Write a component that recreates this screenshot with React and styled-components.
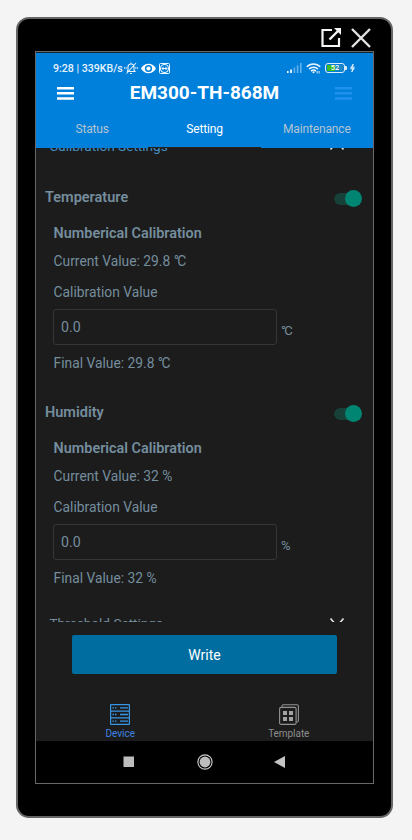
import React from "react";
import styled, { createGlobalStyle } from "styled-components";

const GlobalStyle = createGlobalStyle`
  * { box-sizing: border-box; }
  html, body { margin: 0; background: #f4f4f4; }
  body { font-family: Roboto, "Noto Sans", sans-serif; overflow: hidden; }
  svg { display: block; flex: none; }
`;

const Page = styled.div`
  height: 840px;
  padding: 17px 19px 0 16px;
`;
const Device = styled.div`
  width: 377px;
  height: 801px;
  border: 2px solid #656567;
  border-radius: 13px;
  background: #000;
`;
const WindowBar = styled.div`
  height: 32px;
  display: flex;
  justify-content: flex-end;
  gap: 10px;
  padding: 9px 20px 0 0;
`;
const Screen = styled.div`
  width: 339px;
  height: 733px;
  margin-left: 17px;
  border: 1px solid #686868;
  background: #1c1c1c;
  display: flex;
  flex-direction: column;
  overflow: hidden;
`;
const Header = styled.header`
  flex: none;
  height: 96px;
  background: #007fdb;
  border-top: 1px solid #10242f;
  color: #fff;
`;
const StatusBar = styled.div`
  height: 30px;
  display: flex;
  align-items: center;
  padding: 0 18px 0 17px;
`;
const StatusText = styled.span`
  width: 71px;
  font-size: 10.6px;
  font-weight: 500;
  white-space: nowrap;
  color: #e8f3fb;
`;
const StatusIcons = styled.div`
  display: flex;
  align-items: center;
  gap: ${(p) => p.$gap}px;
  margin-left: ${(p) => (p.$end ? "auto" : "0")};
`;
const TitleRow = styled.div`
  height: 20px;
  display: flex;
  align-items: center;
  justify-content: space-between;
  padding: 0 21px;
`;
const Title = styled.h1`
  margin: 0;
  font-size: 19px;
  line-height: 20px;
  font-weight: 700;
`;
const Tabs = styled.nav`
  height: 45px;
  display: grid;
  grid-template-columns: repeat(3, 1fr);
`;
const Tab = styled.a`
  padding-top: 18px;
  text-align: center;
  font-size: 12px;
  letter-spacing: -0.15px;
  line-height: 16px;
  color: ${(p) => (p.$active ? "#fff" : "#b4c4d0")};
  border-bottom: 1px solid ${(p) => (p.$active ? "#25221c" : "#007fdb")};
`;
const Content = styled.main`
  flex: none;
  height: 474px;
  overflow: hidden;
  color: #758e9e;
  font-size: 13.8px;
  line-height: 20px;
`;
const Collapse = styled.div`
  height: 20px;
  margin-top: ${(p) => p.$top}px;
  padding: 0 28px 0 13.5px;
  display: flex;
  align-items: center;
  justify-content: space-between;
  font-size: 13.6px;
  color: ${(p) => (p.$open ? "#448fc3" : "#758e9e")};
`;
const Sensor = styled.section`
  margin-top: ${(p) => p.$top}px;
  padding: 0 11px 0 9px;
`;
const SensorHead = styled.div`
  height: 20px;
  display: flex;
  align-items: center;
  justify-content: space-between;
  font-size: 14.5px;
  font-weight: 600;
`;
const Track = styled.span`
  width: 28px;
  height: 18px;
  margin-top: 1px;
  display: flex;
  align-items: center;
  justify-content: flex-end;
  background: linear-gradient(#174039, #174039) 100% 50% / 20px 12px no-repeat,
    radial-gradient(circle, #174039 5.5px, transparent 6px) 0 50% / 12px 12px no-repeat;
  background-position: 6px 50%, 0 50%;
`;
const Knob = styled.span`
  width: 17px;
  height: 17px;
  border-radius: 50%;
  background: #008573;
  box-shadow: 3px 0 0 -3px #1c1c1c;
`;
const Calibration = styled.div`
  padding-left: 8.6px;
  display: flex;
  flex-direction: column;
`;
const Line = styled.div`
  height: 20px;
  margin-top: ${(p) => p.$gap}px;
  font-weight: ${(p) => (p.$bold ? 600 : 400)};
  font-size: ${(p) => (p.$bold ? 14.4 : 13.8)}px;
  white-space: nowrap;
`;
const Field = styled.div`
  margin: 7px 0 0 -0.6px;
  display: flex;
  align-items: center;
  gap: 4px;
`;
const Input = styled.input`
  width: 224px;
  height: 36px;
  padding: 0 7px;
  border: 1px solid #363636;
  border-radius: 3px;
  background: transparent;
  color: #758e9e;
  font: 14.2px Roboto, sans-serif;
  outline: none;
`;
const Unit = styled.span`
  padding-top: 8px;
  font-size: 13px;
`;
const Degree = styled.span`
  letter-spacing: -1.5px;
`;
const Footer = styled.footer`
  flex: 1;
  display: flex;
  flex-direction: column;
`;
const WriteButton = styled.button`
  width: 265px;
  height: 39px;
  margin: 13px 0 0 36px;
  border: 0;
  border-radius: 2px;
  background: #006da1;
  color: #fff;
  font: 400 14px Roboto, sans-serif;
`;
const BottomTabs = styled.nav`
  margin-top: 30px;
  display: grid;
  grid-template-columns: repeat(2, 1fr);
`;
const BottomTab = styled.a`
  display: flex;
  flex-direction: column;
  align-items: center;
  gap: 3px;
  font-size: 10px;
  letter-spacing: -0.05px;
  line-height: 12px;
  color: ${(p) => (p.$active ? "#3d83e2" : "#8e8e8e")};
`;
const SystemNav = styled.div`
  flex: none;
  height: 42px;
  background: #000;
  display: grid;
  grid-template-columns: repeat(3, 75.5px);
  justify-content: center;
  align-items: center;
  justify-items: center;
`;

const OpenIcon = () => (
  <svg width="20" height="20" viewBox="0 0 20 20" fill="none" stroke="#f5f5f5">
    <path d="M11 2H1.5V18H18V10" strokeWidth="2.2" />
    <path d="M8.5 11.5L17 3" strokeWidth="2.4" />
    <path d="M13 0H20V7Z" fill="#f5f5f5" stroke="none" />
  </svg>
);
const CloseIcon = () => (
  <svg width="20" height="20" viewBox="0 0 20 20" fill="none" stroke="#e4e4e4" strokeWidth="2.4">
    <path d="M1 1L19 19M19 1L1 19" />
  </svg>
);
const MuteIcon = () => (
  <svg width="14" height="13" viewBox="0 0 14 13" fill="none" stroke="#e8f3fb" strokeWidth="1.1">
    <path d="M3 9.5H11L10 8V5C10 3 9 2 7 2S4 3 4 5V8L3 9.5M6 11.5H8M7 .5V2M2.5 11.5L12 1" />
    <path d="M.6 5V7M13.4 5V7M2.2 4.8V7M11.8 4.8V7" strokeWidth=".8" />
  </svg>
);
const EyeIcon = () => (
  <svg width="15" height="11" viewBox="0 0 15 11">
    <path d="M0 5.5C3-.8 12-.8 15 5.5C12 11.8 3 11.8 0 5.5Z" fill="#fff" />
    <circle cx="7.5" cy="5.5" r="3.6" fill="#007fdb" />
    <circle cx="7.5" cy="5.5" r="2.1" fill="#fff" />
  </svg>
);
const RemoteIcon = () => (
  <svg width="11" height="11" viewBox="0 0 11 11">
    <rect x=".5" y=".5" width="10" height="10" rx="1" fill="#007fdb" stroke="#eaf5fc" />
    <circle cx="5.5" cy="5.5" r="4" fill="none" stroke="#eaf5fc" strokeWidth="1.1" />
    <path d="M2.3 5.5L4.5 3.8V5H6.5V3.8L8.7 5.5L6.5 7.2V6H4.5V7.2Z" fill="#fff" />
  </svg>
);
const SignalIcon = () => (
  <svg width="15" height="10" viewBox="0 0 15 10">
    <path d="M0 8H1.6V10H0ZM3.2 6.5H4.9V10H3.2Z" fill="#fff" />
    <path d="M6.6 4.5H8.2V10H6.6ZM9.8 2.3H11.4V10H9.8ZM13 0H14.6V10H13Z" fill="#63b1ea" />
  </svg>
);
const WifiIcon = () => (
  <svg width="15" height="11" viewBox="0 0 15 11" fill="none" stroke="#edf6fc" strokeWidth="1.5">
    <path d="M.8 3.8C4.4 0 10.6 0 14.2 3.8M3 6.1C5.5 3.5 9.5 3.5 12 6.1M5 8.1C6.5 6.8 8.5 6.8 10 8.1" />
    <circle cx="7.5" cy="9.3" r="1" fill="#fff" stroke="none" />
    <path d="M11.2 8V10.5M13.1 8V10.5" strokeWidth=".9" />
  </svg>
);
const Battery = styled.span`
  width: 20px;
  height: 10px;
  border: 1px solid #dcecf5;
  border-radius: 3px;
  display: flex;
  align-items: center;
  justify-content: center;
  font-size: 7.5px;
  line-height: 8px;
  font-weight: 500;
  background: linear-gradient(90deg, #3cba22 8px, #1d85c0 8px) 50% / 16px 6px no-repeat;
`;
const BatteryTip = styled.span`
  width: 2px;
  height: 4px;
  margin: 0 3px 0 0;
  background: #dcecf5;
  border-radius: 0 1px 1px 0;
`;
const PowerCell = styled.span`
  display: flex;
  align-items: center;
`;
const BoltIcon = () => (
  <svg width="5" height="10" viewBox="0 0 6 10">
    <path d="M4 .3L2 4M4 5.8L2 9.7" fill="none" stroke="#fff" strokeWidth="1.4" />
    <path d="M.6 4H5.6M.4 5.9H5.4" stroke="#fff" strokeWidth="1.2" />
  </svg>
);
const MenuIcon = ({ color }) => (
  <svg width="17" height="13" viewBox="0 0 17 13" fill={color}>
    <path d="M0 0H17V2.5H0ZM0 5.1H17V7.6H0ZM0 10.2H17V12.7H0Z" />
  </svg>
);
const Chevron = ({ up }) => (
  <svg width="16" height="10" viewBox="0 0 16 10" fill="none" stroke="#e3e3e3" strokeWidth="1.6">
    <path d={up ? "M1.5 8.5L8 1L14.5 8.5" : "M1.5 .5L8 8L14.5 .5"} />
  </svg>
);
const DeviceIcon = () => (
  <svg width="20" height="21" viewBox="0 0 20 21" fill="none" stroke="#3795e6" strokeWidth="1.2">
    <rect x=".6" y=".6" width="18.8" height="19.8" rx=".5" />
    <path d="M.6 7.2H19.4M.6 13.8H19.4" />
    <path d="M10 3.9H18M10 10.5H18M10 17.1H18" strokeWidth="1.4" />
    <path d="M2.5 3.9H4M5 3.9H6.5M2.5 10.5H4M5 10.5H6.5M2.5 17.1H4M5 17.1H6.5" strokeWidth="1.3" />
  </svg>
);
const TemplateIcon = () => (
  <svg width="20" height="21" viewBox="0 0 20 21" fill="none" stroke="#929292" strokeWidth="1.1">
    <rect x=".6" y="3.4" width="16.5" height="17" rx="1.5" />
    <path d="M3 3V2.2Q3 .8 4.4 .8H18Q19.4 .8 19.4 2.2V16.5Q19.4 18 18 18H17.4" />
    <path d="M4 7H8V11H4ZM10 7H14V11H10ZM4 13H8V17H4ZM10 13H14V17H10Z" fill="#a2a2a2" stroke="none" />
  </svg>
);
const StopIcon = () => (
  <svg width="12" height="12" viewBox="0 0 12 12">
    <rect x=".5" y=".5" width="10.5" height="10.5" fill="#bdbdbd" />
  </svg>
);
const HomeIcon = () => (
  <svg width="16" height="16" viewBox="0 0 16 16">
    <circle cx="8" cy="8" r="7.1" fill="none" stroke="#d0d0d0" strokeWidth="1.1" />
    <circle cx="8" cy="8" r="5.4" fill="#bdbdbd" />
  </svg>
);
const BackIcon = () => (
  <svg width="12" height="12" viewBox="0 0 12 12">
    <path d="M0 6L11 0V12Z" fill="#c4c4c4" />
  </svg>
);

const sensors = [
  { name: "Temperature", value: "29.8", unit: "°C", top: 32 },
  { name: "Humidity", value: "32", unit: "%", top: 30 },
];

function SensorBlock({ name, value, unit, top }) {
  const mark = unit === "%" ? unit : <Degree>{unit}</Degree>;
  return (
    <Sensor $top={top}>
      <SensorHead>
        {name}
        <Track><Knob /></Track>
      </SensorHead>
      <Calibration>
        <Line $bold $gap={16}>Numberical Calibration</Line>
        <Line $gap={7}>Current Value: {value} {mark}</Line>
        <Line $gap={11}>Calibration Value</Line>
        <Field>
          <Input defaultValue="0.0" />
          <Unit>{mark}</Unit>
        </Field>
        <Line $gap={8}>Final Value: {value} {mark}</Line>
      </Calibration>
    </Sensor>
  );
}

export default function App() {
  return (
    <Page>
      <GlobalStyle />
      <Device>
        <WindowBar>
          <OpenIcon />
          <CloseIcon />
        </WindowBar>
        <Screen>
          <Header>
            <StatusBar>
              <StatusText>9:28 | 339KB/s</StatusText>
              <StatusIcons $gap={3}>
                <MuteIcon />
                <EyeIcon />
                <RemoteIcon />
              </StatusIcons>
              <StatusIcons $gap={4} $end>
                <SignalIcon />
                <WifiIcon />
                <PowerCell>
                  <Battery>52</Battery>
                  <BatteryTip />
                  <BoltIcon />
                </PowerCell>
              </StatusIcons>
            </StatusBar>
            <TitleRow>
              <MenuIcon color="#fff" />
              <Title>EM300-TH-868M</Title>
              <MenuIcon color="#1f92ee" />
            </TitleRow>
            <Tabs>
              <Tab>Status</Tab>
              <Tab $active>Setting</Tab>
              <Tab>Maintenance</Tab>
            </Tabs>
          </Header>
          <Content>
            <Collapse $open $top={-12}>
              Calibration Settings
              <Chevron up />
            </Collapse>
            {sensors.map((s) => (
              <SensorBlock key={s.name} {...s} />
            ))}
            <Collapse $top={25}>
              Threshold Settings
              <Chevron />
            </Collapse>
          </Content>
          <Footer>
            <WriteButton>Write</WriteButton>
            <BottomTabs>
              <BottomTab $active>
                <DeviceIcon />
                Device
              </BottomTab>
              <BottomTab>
                <TemplateIcon />
                Template
              </BottomTab>
            </BottomTabs>
          </Footer>
          <SystemNav>
            <StopIcon />
            <HomeIcon />
            <BackIcon />
          </SystemNav>
        </Screen>
      </Device>
    </Page>
  );
}
